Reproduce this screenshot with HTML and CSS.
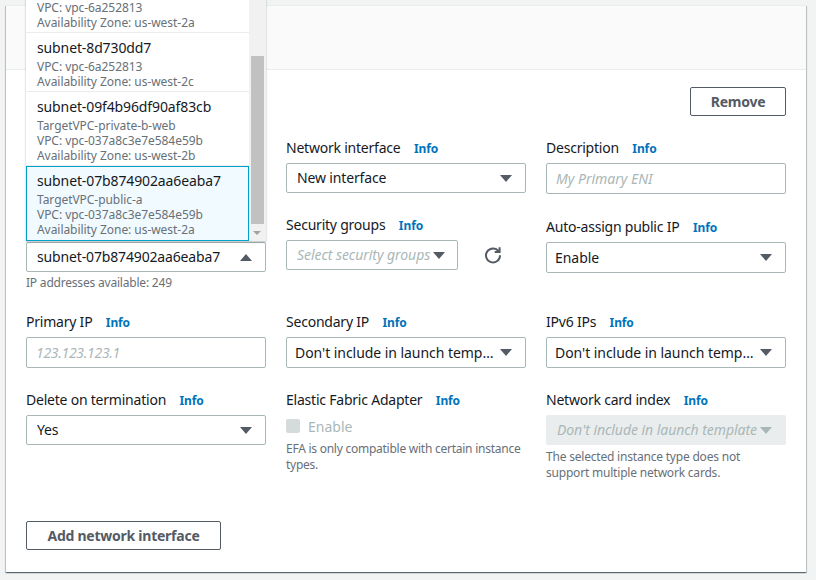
FILE: index.html
```html
<!DOCTYPE html>
<html lang="en">
<head>
    <meta charset="UTF-8">
    <meta name="viewport" content="width=device-width, initial-scale=1.0">
    <title>Network interfaces</title>
    <link rel="stylesheet" href="styles.css">
</head>
<body>

    <div class="card">
        <div class="card-header"></div>
        <div class="card-body">

            <div class="remove-row">
                <button class="btn btn-remove">Remove</button>
            </div>

            <div class="form-grid">
                <!-- row 1, first cell sits under the open dropdown -->
                <div class="field"></div>
                <div class="field">
                    <div class="label">Network interface <a class="info">Info</a></div>
                    <div class="select"><span class="select-text">New interface</span><span class="caret"></span></div>
                </div>
                <div class="field">
                    <div class="label">Description <a class="info">Info</a></div>
                    <input class="input" type="text" placeholder="My Primary ENI">
                </div>

                <!-- row 2 -->
                <div class="field field-subnet">
                    <div class="dropdown">
                        <div class="dropdown-list">
                            <div class="option">
                                <div class="option-sub">VPC: vpc-6a252813</div>
                                <div class="option-sub">Availability Zone: us-west-2a</div>
                            </div>
                            <div class="option">
                                <div class="option-name">subnet-8d730dd7</div>
                                <div class="option-sub">VPC: vpc-6a252813</div>
                                <div class="option-sub">Availability Zone: us-west-2c</div>
                            </div>
                            <div class="option">
                                <div class="option-name">subnet-09f4b96df90af83cb</div>
                                <div class="option-sub">TargetVPC-private-b-web</div>
                                <div class="option-sub">VPC: vpc-037a8c3e7e584e59b</div>
                                <div class="option-sub">Availability Zone: us-west-2b</div>
                            </div>
                            <div class="option option-selected">
                                <div class="option-name">subnet-07b874902aa6eaba7</div>
                                <div class="option-sub">TargetVPC-public-a</div>
                                <div class="option-sub">VPC: vpc-037a8c3e7e584e59b</div>
                                <div class="option-sub">Availability Zone: us-west-2a</div>
                            </div>
                        </div>
                        <div class="scrollbar">
                            <div class="scroll-thumb"></div>
                            <div class="scroll-down"></div>
                        </div>
                    </div>
                    <div class="select"><span class="select-text">subnet-07b874902aa6eaba7</span><span class="caret caret-up"></span></div>
                    <div class="hint">IP addresses available: 249</div>
                </div>
                <div class="field field-security">
                    <div class="label">Security groups <a class="info">Info</a></div>
                    <div class="security-row">
                        <div class="select select-security"><span class="select-text placeholder">Select security groups</span><span class="caret"></span></div>
                        <svg class="refresh" width="18" height="18" viewBox="0 0 18 18" fill="none" stroke="#545b64" stroke-width="2">
                            <path d="M14.6 5.2A7 7 0 1 0 16 9.2"/>
                            <path d="M15.6 1.2v4.9h-4.9" stroke-linejoin="miter"/>
                        </svg>
                    </div>
                </div>
                <div class="field">
                    <div class="label label-low">Auto-assign public IP <a class="info">Info</a></div>
                    <div class="select select-tall"><span class="select-text">Enable</span><span class="caret"></span></div>
                </div>

                <!-- row 3 -->
                <div class="field">
                    <div class="label">Primary IP <a class="info">Info</a></div>
                    <input class="input input-ip" type="text" placeholder="123.123.123.1">
                </div>
                <div class="field">
                    <div class="label">Secondary IP <a class="info">Info</a></div>
                    <div class="select select-tall"><span class="select-text">Don't include in launch template</span><span class="caret"></span></div>
                </div>
                <div class="field">
                    <div class="label">IPv6 IPs <a class="info">Info</a></div>
                    <div class="select select-tall"><span class="select-text">Don't include in launch template</span><span class="caret"></span></div>
                </div>

                <!-- row 4 -->
                <div class="field">
                    <div class="label">Delete on termination <a class="info">Info</a></div>
                    <div class="select"><span class="select-text">Yes</span><span class="caret"></span></div>
                </div>
                <div class="field">
                    <div class="label">Elastic Fabric Adapter <a class="info">Info</a></div>
                    <div class="check-row">
                        <span class="checkbox"></span>
                        <span class="check-label">Enable</span>
                    </div>
                    <div class="hint hint-efa">EFA is only compatible with certain instance types.</div>
                </div>
                <div class="field">
                    <div class="label">Network card index <a class="info">Info</a></div>
                    <div class="select select-disabled"><span class="select-text">Don't include in launch template</span><span class="caret"></span></div>
                    <div class="hint hint-card">The selected instance type does not support multiple network cards.</div>
                </div>
            </div>

            <button class="btn btn-add">Add network interface</button>
        </div>
    </div>

</body>
</html>
```

FILE: styles.css
```css
body {
    margin: 0;
    height: 580px;
    overflow: hidden;
    background-color: #f2f3f3;
    font-family: "Noto Sans", "Liberation Sans", sans-serif;
    font-size: 14px;
    color: #16191f;
}

/* card */
.card {
    width: 800px;
    height: 567px;
    margin: 5px 0 0 6px;
    background-color: white;
    box-shadow: 0 1px 1px 0 rgba(0, 28, 36, 0.5), 1px 1px 1px 0 rgba(0, 28, 36, 0.15), -1px 1px 1px 0 rgba(0, 28, 36, 0.15);
    border-top: 1px solid #eaeded;
    box-sizing: border-box;
}
.card-header {
    height: 63px;
    background-color: #fafafa;
    border-bottom: 1px solid #eaeded;
}
.card-body {
    padding: 17px 20px 0 20px;
}

/* buttons */
.btn {
    display: block;
    height: 29px;
    padding: 0;
    background-color: white;
    border: 1px solid #545b64;
    border-radius: 2px;
    color: #545b64;
    font-family: inherit;
    font-size: 14px;
    font-weight: 700;
    letter-spacing: -0.25px;
}
.remove-row {
    display: flex;
    justify-content: flex-end;
}
.btn-remove {
    width: 96px;
}
.btn-add {
    width: 195px;
    margin-top: 40px;
}

/* form */
.form-grid {
    display: grid;
    grid-template-columns: repeat(3, 240px);
    grid-template-rows: 59px auto 58px auto;
    column-gap: 20px;
    row-gap: 20px;
    margin-top: 21px;
}
.field {
    position: relative;
    min-width: 0;
}
.field-subnet {
    padding-top: 26px;
}
.field-security {
    margin-top: -2px;
}
.label {
    height: 22px;
    line-height: 22px;
    margin-bottom: 4px;
    white-space: nowrap;
    letter-spacing: -0.22px;
}
.label-low {
    height: 21px;
    line-height: 21px;
    margin-bottom: 5px;
}
.info {
    margin-left: 10px;
    color: #0073bb;
    font-size: 12px;
    font-weight: 700;
    letter-spacing: -0.1px;
}
.hint {
    margin-top: 3px;
    line-height: 16px;
    font-size: 12px;
    color: #687078;
    letter-spacing: -0.2px;
}
.hint-efa {
    margin-top: 4px;
    letter-spacing: -0.25px;
}
.hint-card {
    margin-top: 4px;
}

/* inputs and selects */
.input {
    display: block;
    width: 100%;
    height: 31px;
    padding: 0 9px;
    box-sizing: border-box;
    border: 1px solid #aab7b8;
    border-radius: 2px;
    font-family: inherit;
    font-size: 14px;
}
.input::placeholder {
    color: #aab7b8;
    font-style: italic;
    opacity: 1;
}
.input-ip::placeholder {
    letter-spacing: -0.3px;
}
.select {
    display: flex;
    align-items: center;
    height: 30px;
    padding: 0 13px 0 10px;
    box-sizing: border-box;
    background-color: white;
    border: 1px solid #aab7b8;
    border-radius: 2px;
}
.select-text {
    flex: 1;
    min-width: 0;
    padding-bottom: 2px;
    overflow: hidden;
    white-space: nowrap;
    text-overflow: ellipsis;
    letter-spacing: -0.15px;
}
.select-tall {
    height: 31px;
    padding-left: 8px;
}
.select-tall .select-text {
    padding-bottom: 0;
    letter-spacing: -0.05px;
}
.select-disabled {
    background-color: #eaeded;
    border-color: #eaeded;
    color: #aab7b8;
    font-style: italic;
}
.select-disabled .select-text,
.placeholder {
    letter-spacing: -0.05px;
}
.select-disabled .caret,
.select-security .caret {
    margin-left: 1px;
}
.select-security {
    width: 172px;
    padding-right: 12px;
}
.placeholder {
    color: #aab7b8;
    font-style: italic;
}
.caret {
    flex: none;
    margin-left: 3px;
    border-left: 6px solid transparent;
    border-right: 6px solid transparent;
    border-top: 7px solid #545b64;
}
.caret-up {
    border-top: none;
    border-bottom: 7px solid #545b64;
}
.select-disabled .caret {
    border-top-color: #aab7b8;
}
.security-row {
    display: flex;
    align-items: center;
}
.refresh {
    margin-left: 26px;
}

/* disabled checkbox */
.check-row {
    display: flex;
    align-items: center;
    height: 22px;
}
.checkbox {
    width: 14px;
    height: 14px;
    border-radius: 2px;
    background-color: #d5dbdb;
}
.check-label {
    margin-left: 8px;
    color: #aab7b8;
}

/* open subnet dropdown, anchored above the select */
.dropdown {
    position: absolute;
    left: 0;
    bottom: 100%;
    margin-bottom: -25px;
    width: 240px;
    display: flex;
    background-color: white;
    box-shadow: 0 1px 2px rgba(0, 28, 36, 0.3);
    z-index: 5;
}
.dropdown-list {
    flex: 1;
    min-width: 0;
}
.option {
    padding: 4px 10px 2px 11px;
    border-bottom: 1px solid #eaeded;
}
.option-name {
    line-height: 22px;
    letter-spacing: -0.12px;
}
.option-sub {
    line-height: 15px;
    font-size: 12px;
    color: #687078;
    letter-spacing: -0.05px;
}
.option-selected {
    padding: 3px 9px 3px 10px;
    background-color: #f1faff;
    border: 1px solid #00a1c9;
}
.scrollbar {
    position: relative;
    flex: none;
    width: 17px;
    background-color: #f1f1f1;
}
.scroll-thumb {
    position: absolute;
    left: 2px;
    right: 2px;
    bottom: 17px;
    height: 168px;
    background-color: #c1c1c1;
}
.scroll-down {
    position: absolute;
    left: 4px;
    bottom: 6px;
    border-left: 4px solid transparent;
    border-right: 4px solid transparent;
    border-top: 4px solid #a3a3a3;
}
```
